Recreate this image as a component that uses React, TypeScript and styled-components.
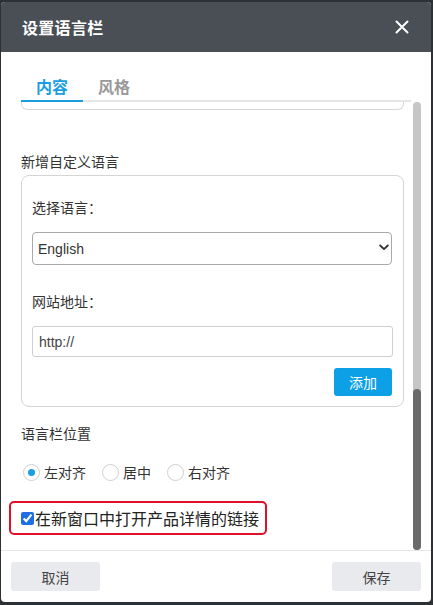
import React from "react";
import styled, { createGlobalStyle } from "styled-components";

const Global = createGlobalStyle`
  html, body { margin: 0; padding: 0; }
  body {
    background: #2c3136;
    font-family: "Helvetica Neue", "Liberation Sans", "Noto Sans CJK SC", sans-serif;
    width: 433px;
    height: 605px;
    overflow: hidden;
  }
`;

const Dialog = styled.div`
  margin: 2px 2px 0 1px;
  width: 430px;
  height: 600px;
  background: #fff;
  border-radius: 4px;
  overflow: hidden;
  display: flex;
  flex-direction: column;
`;

const Header = styled.div`
  height: 50px;
  flex: none;
  background: #4a4f56;
  display: flex;
  align-items: center;
  justify-content: space-between;
  padding: 0 22px 0 21px;
`;

const Title = styled.div`
  color: #fff;
  font-size: 16px;
  font-weight: 700;
  letter-spacing: 0.3px;
  font-family: "Noto Sans CJK SC", sans-serif;
`;

const Close = styled.button`
  border: 0;
  background: none;
  padding: 0;
  width: 14px;
  height: 14px;
  display: flex;
  cursor: pointer;
`;

const TabsBar = styled.div`
  flex: none;
  margin: 22px 20px 0 20px;
  display: flex;
  border-bottom: 2px solid #e6e6e6;
`;

const Tab = styled.div<{ $active?: boolean }>`
  padding: 0 15px;
  height: 26px;
  line-height: 24px;
  font-size: 16px;
  font-weight: 700;
  font-family: "Noto Sans CJK SC", sans-serif;
  color: ${(p) => (p.$active ? "#1a9ee0" : "#999")};
  margin-bottom: -2px;
  border-bottom: 2px solid ${(p) => (p.$active ? "#1a9ee0" : "transparent")};
`;

const Main = styled.div`
  flex: 1;
  display: flex;
  min-height: 0;
`;

const Content = styled.div`
  flex: 1;
  padding: 0 0 0 20px;
  min-width: 0;
  overflow: hidden;
`;

const BoxTail = styled.div`
  width: 383px;
  height: 8px;
  box-sizing: border-box;
  border: 1px solid #d8d8d8;
  border-top: 0;
  border-radius: 0 0 6px 6px;
`;

const SectionLabel = styled.div<{ $top: number }>`
  margin-top: ${(p) => p.$top}px;
  font-size: 14px;
  line-height: 20px;
  height: 20px;
  color: #333;
  font-family: "Noto Sans CJK SC", sans-serif;
`;

const Card = styled.div`
  margin-top: 4px;
  width: 383px;
  box-sizing: border-box;
  border: 1px solid #d4d4d4;
  border-radius: 8px;
  padding: 21px 10px 10px 10px;
  display: flex;
  flex-direction: column;
`;

const FieldLabel = styled.div<{ $top?: number }>`
  margin-top: ${(p) => p.$top ?? 0}px;
  font-size: 14px;
  line-height: 20px;
  color: #333;
  font-family: "Noto Sans CJK SC", sans-serif;
`;

const SelectWrap = styled.div`
  position: relative;
  margin-top: 15px;
  width: 360px;
`;

const Select = styled.select`
  appearance: none;
  width: 100%;
  height: 33px;
  box-sizing: border-box;
  border: 1px solid #a9a9a9;
  border-radius: 4px;
  background: #fff;
  padding: 0 24px 0 5px;
  font-size: 14px;
  color: #333;
  font-family: "Helvetica Neue", "Liberation Sans", sans-serif;
  outline: none;
`;

const Chevron = styled.svg`
  position: absolute;
  right: 3px;
  top: 12px;
  pointer-events: none;
`;

const Input = styled.input`
  margin-top: 15px;
  width: 361px;
  height: 31px;
  box-sizing: border-box;
  border: 1px solid #cfcfcf;
  border-radius: 3px;
  padding: 0 6px;
  font-size: 14px;
  color: #444;
  font-family: "Helvetica Neue", "Liberation Sans", sans-serif;
  outline: none;
`;

const AddRow = styled.div`
  margin-top: 11px;
  display: flex;
  justify-content: flex-end;
  padding-right: 1px;
`;

const PrimaryButton = styled.button`
  width: 58px;
  height: 28px;
  border: 0;
  border-radius: 3px;
  background: #0ea0e6;
  color: #fff;
  font-size: 14px;
  font-family: "Noto Sans CJK SC", sans-serif;
  padding: 0;
`;

const RadioRow = styled.div`
  margin-top: 19px;
  height: 20px;
  display: flex;
  align-items: center;
  gap: 0;
  padding-left: 2px;
`;

const RadioLabel = styled.label`
  display: flex;
  align-items: center;
  margin-right: 16px;
  font-size: 14px;
  color: #333;
  font-family: "Noto Sans CJK SC", sans-serif;
`;

const Radio = styled.input`
  appearance: none;
  margin: 0 4px 0 0;
  width: 17px;
  height: 17px;
  box-sizing: border-box;
  border-radius: 50%;
  border: 1px solid #cfcfcf;
  background: #fff;
  display: grid;
  place-items: center;
  &:checked::after {
    content: "";
    width: 7px;
    height: 7px;
    border-radius: 50%;
    background: #1a9ee0;
  }
`;

const Highlight = styled.label`
  margin: 19px 0 0 -12px;
  width: 258px;
  height: 34px;
  box-sizing: border-box;
  border: 2px solid #e0102c;
  border-radius: 5px;
  display: flex;
  align-items: center;
  padding-left: 10px;
  font-size: 16px;
  color: #222;
  font-family: "Noto Sans CJK SC", sans-serif;
`;

const Check = styled.input`
  margin: 0 1px 0 0;
  width: 13px;
  height: 13px;
  accent-color: #1f6fe0;
`;

const ScrollTrack = styled.div`
  width: 8px;
  margin: 0 10px 0 9px;
  background: #c6c6c6;
  border-radius: 4px;
  display: flex;
  flex-direction: column;
  justify-content: flex-end;
`;

const ScrollThumb = styled.div`
  height: 161px;
  background: #6a6a6a;
  border-radius: 4px;
`;

const Footer = styled.div`
  flex: none;
  border-top: 1px solid #e6e6e6;
  padding: 11px 10px 11px 10px;
  display: flex;
  justify-content: space-between;
`;

const GrayButton = styled.button`
  width: 89px;
  height: 29px;
  border: 0;
  border-radius: 3px;
  background: #e9eaee;
  color: #444;
  font-size: 14px;
  font-family: "Noto Sans CJK SC", sans-serif;
  padding: 0;
`;

export default function App() {
  return (
    <>
      <Global />
      <Dialog>
        <Header>
          <Title>设置语言栏</Title>
          <Close aria-label="close">
            <svg width="14" height="14" viewBox="0 0 14 14">
              <path d="M1.5 1.5 L12.5 12.5 M12.5 1.5 L1.5 12.5" stroke="#fff" strokeWidth="2" strokeLinecap="round" />
            </svg>
          </Close>
        </Header>
        <TabsBar>
          <Tab $active>内容</Tab>
          <Tab>风格</Tab>
        </TabsBar>
        <Main>
          <Content>
            <BoxTail />
            <SectionLabel $top={41}>新增自定义语言</SectionLabel>
            <Card>
              <FieldLabel>选择语言：</FieldLabel>
              <SelectWrap>
                <Select defaultValue="English">
                  <option>English</option>
                </Select>
                <Chevron width="10" height="7" viewBox="0 0 10 7">
                  <path d="M1.2 1.5 L5 5.2 L8.8 1.5" fill="none" stroke="#333" strokeWidth="1.8" strokeLinecap="round" strokeLinejoin="round" />
                </Chevron>
              </SelectWrap>
              <FieldLabel $top={26}>网站地址：</FieldLabel>
              <Input defaultValue="http://" />
              <AddRow>
                <PrimaryButton>添加</PrimaryButton>
              </AddRow>
            </Card>
            <SectionLabel $top={16}>语言栏位置</SectionLabel>
            <RadioRow>
              <RadioLabel>
                <Radio type="radio" name="pos" defaultChecked />
                左对齐
              </RadioLabel>
              <RadioLabel>
                <Radio type="radio" name="pos" />
                居中
              </RadioLabel>
              <RadioLabel>
                <Radio type="radio" name="pos" />
                右对齐
              </RadioLabel>
            </RadioRow>
            <Highlight>
              <Check type="checkbox" defaultChecked />
              在新窗口中打开产品详情的链接
            </Highlight>
          </Content>
          <ScrollTrack>
            <ScrollThumb />
          </ScrollTrack>
        </Main>
        <Footer>
          <GrayButton>取消</GrayButton>
          <GrayButton>保存</GrayButton>
        </Footer>
      </Dialog>
    </>
  );
}
